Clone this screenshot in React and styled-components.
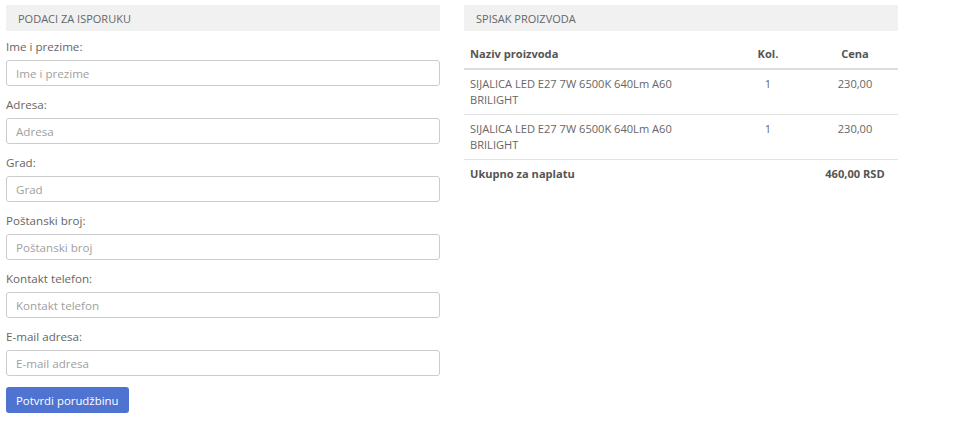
import React from 'react';
import styled, {createGlobalStyle} from 'styled-components';

const GlobalStyle = createGlobalStyle`
    body {
        margin: 0;
        background: #fff;
        font-family: 'Open Sans', 'Liberation Sans', sans-serif;
    }
`;

const Page = styled.div`
    display: flex;
    align-items: flex-start;
    gap: 24px;
    padding: 5px 6px;
`;

const Column = styled.div`
    width: 434px;
    display: flex;
    flex-direction: column;
`;

const SectionTitle = styled.div`
    height: 26px;
    line-height: 27px;
    padding: 0 12px;
    background: #f1f1f1;
    font-size: 11px;
    color: #666;
    text-transform: uppercase;
`;

const Form = styled.form`
    display: flex;
    flex-direction: column;
    padding-top: 7px;
`;

const Field = styled.div`
    display: flex;
    flex-direction: column;
    gap: 4px;
    margin-bottom: 10px;
`;

const Label = styled.label`
    font-size: 11.6px;
    line-height: 18px;
    color: #666;
`;

const Input = styled.input`
    box-sizing: border-box;
    height: 26px;
    width: 100%;
    padding: 0 9px;
    border: 1px solid #ccc;
    border-radius: 3px;
    font-family: inherit;
    font-size: 11.6px;
    color: #666;
    outline: none;

    &::placeholder {
        color: #a0a0a0;
    }
`;

const SubmitButton = styled.button`
    align-self: flex-start;
    height: 26px;
    margin-top: 1px;
    padding: 0 10px;
    border: none;
    border-radius: 3px;
    background: #4e73d1;
    color: #fff;
    font-family: inherit;
    font-size: 11.4px;
    cursor: pointer;
`;

const Table = styled.table`
    width: 100%;
    margin-top: 9px;
    border-collapse: collapse;
    table-layout: fixed;
    font-size: 11.1px;
    line-height: 16px;
    color: #666;

    th {
        padding: 6px;
        border-bottom: 2px solid #ddd;
        font-weight: 700;
        color: #555;
        text-align: left;
    }

    td {
        padding: 6px;
        border-bottom: 1px solid #e2e2e2;
        vertical-align: top;
    }

    tfoot td {
        border-bottom: none;
        font-weight: 700;
        color: #555;
    }
`;

const Cell = styled.td`
    text-align: ${props => props.align || 'left'};
`;

const HeadCell = styled.th`
    && {
        text-align: ${props => props.align || 'left'};
    }
`;

const fields = [
    'Ime i prezime',
    'Adresa',
    'Grad',
    'Poštanski broj',
    'Kontakt telefon',
    'E-mail adresa',
];

const products = [
    {name: 'SIJALICA LED E27 7W 6500K 640Lm A60 BRILIGHT', qty: 1, price: '230,00'},
    {name: 'SIJALICA LED E27 7W 6500K 640Lm A60 BRILIGHT', qty: 1, price: '230,00'},
];

const App = () => {
    return (
        <>
            <GlobalStyle />
            <Page>
                <Column>
                    <SectionTitle>Podaci za isporuku</SectionTitle>
                    <Form onSubmit={e => e.preventDefault()}>
                        {fields.map(field => (
                            <Field key={field}>
                                <Label>{field}:</Label>
                                <Input placeholder={field} />
                            </Field>
                        ))}
                        <SubmitButton type='submit'>Potvrdi porudžbinu</SubmitButton>
                    </Form>
                </Column>

                <Column>
                    <SectionTitle>Spisak proizvoda</SectionTitle>
                    <Table>
                        <colgroup>
                            <col />
                            <col style={{width: '88px'}} />
                            <col style={{width: '86px'}} />
                        </colgroup>
                        <thead>
                            <tr>
                                <HeadCell>Naziv proizvoda</HeadCell>
                                <HeadCell align='center'>Kol.</HeadCell>
                                <HeadCell align='center'>Cena</HeadCell>
                            </tr>
                        </thead>
                        <tbody>
                            {products.map((p, i) => (
                                <tr key={i}>
                                    <Cell>{p.name}</Cell>
                                    <Cell align='center'>{p.qty}</Cell>
                                    <Cell align='center'>{p.price}</Cell>
                                </tr>
                            ))}
                        </tbody>
                        <tfoot>
                            <tr>
                                <Cell>Ukupno za naplatu</Cell>
                                <Cell />
                                <Cell align='center'>460,00 RSD</Cell>
                            </tr>
                        </tfoot>
                    </Table>
                </Column>
            </Page>
        </>
    );
};

export default App;
